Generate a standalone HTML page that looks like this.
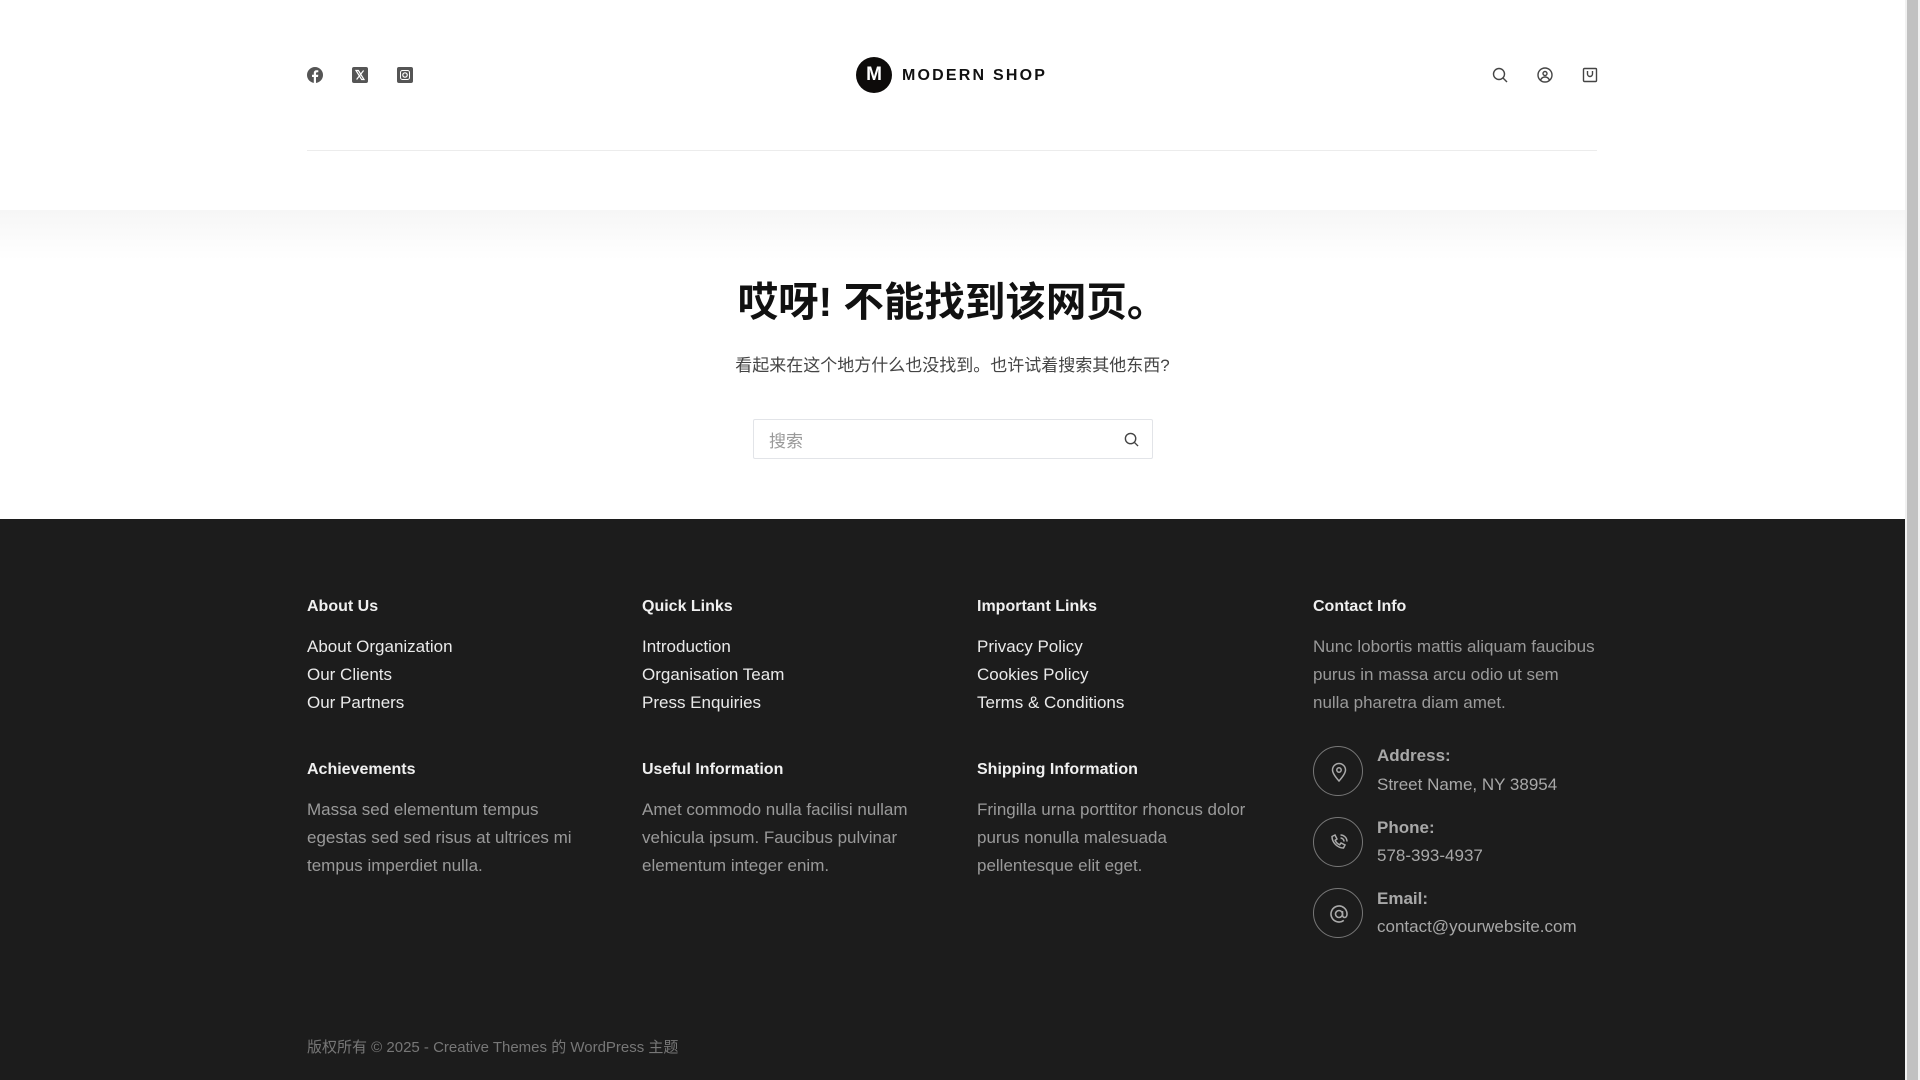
<!DOCTYPE html>
<html><head><meta charset="utf-8"><style>
*{margin:0;padding:0;box-sizing:border-box}
html,body{width:1920px;height:1080px;overflow:hidden;background:#fff;font-family:"Liberation Sans","Noto Sans CJK SC",sans-serif}
.a{position:absolute;white-space:nowrap}
#sb{position:absolute;left:1905px;top:0;width:15px;height:1080px;background:#f1f1f1}
#sb div{position:absolute;left:2px;top:0;width:11px;height:1080px;background:#c1c1c1}
.hd{position:absolute;left:0;top:0;width:1905px;height:210px;background:#fff}
.shade{position:absolute;left:0;top:210px;width:1905px;height:50px;background:linear-gradient(#f6f6f6,#fff)}
.ft{position:absolute;left:0;top:519px;width:1905px;height:561px;background:#1c1c1c}
.h{font-size:16px;font-weight:bold;color:#f0f0f0}
.l{font-size:17px;color:#eaeaea;line-height:28px}
.p{font-size:17px;color:#9a9a9a;line-height:28px;white-space:normal;width:290px}
.c{position:absolute;width:50px;height:50px;border:1px solid #777;border-radius:50%}
.c svg{position:absolute;left:14px;top:14px}
.lb{font-size:17px;font-weight:bold;color:#a8a8a8}
.v{font-size:17px;color:#a8a8a8}
</style></head><body>
<div class="hd"></div>
<div class="shade"></div>
<svg class="a" style="left:307px;top:67px" width="16" height="16" viewBox="0 0 16 16"><circle cx="8" cy="8" r="8" fill="#555"/><path d="M9 16V10h2l.3-2.3H9V6.4c0-.6.2-1.1 1.1-1.1h1.2V3.3c-.5-.1-1.1-.1-1.700-.1-1.7 0-2.8 1-2.8 2.9v1.6H5V10h1.8v6z" fill="#fff"/></svg>
<svg class="a" style="left:352px;top:67px" width="16" height="16" viewBox="0 0 16 16"><rect width="16" height="16" rx="2" fill="#555"/><path d="M4 3.5h2.4l5.6 9H9.6zM11.6 3.5L4.6 12.5" stroke="#fff" stroke-width="1.2" fill="none"/></svg>
<svg class="a" style="left:397px;top:67px" width="16" height="16" viewBox="0 0 16 16"><rect width="16" height="16" rx="2" fill="#555"/><rect x="3.5" y="3.5" width="9" height="9" rx="2" fill="none" stroke="#fff" stroke-width="1"/><circle cx="8" cy="8" r="2.2" fill="none" stroke="#fff" stroke-width="1.2"/></svg>
<div class="a" style="left:856px;top:57px;width:36px;height:36px;border-radius:50%;background:#0d0b0a;color:#fff;font-weight:bold;font-size:19px;line-height:36px;text-align:center">M</div>
<div class="a" style="left:902px;top:67px;font-size:16px;font-weight:bold;letter-spacing:2.2px;color:#111">MODERN SHOP</div>
<svg class="a" style="left:1492px;top:67px" width="16" height="16" viewBox="0 0 16 16" fill="none" stroke="#444" stroke-width="1.4"><circle cx="7" cy="7" r="5.5"/><path d="M11 11l4 4"/></svg>
<svg class="a" style="left:1537px;top:67px" width="16" height="16" viewBox="0 0 16 16" fill="none" stroke="#444" stroke-width="1.4"><circle cx="8" cy="8" r="7"/><circle cx="8" cy="6.5" r="2"/><path d="M3.5 13c1-2 2.5-3 4.5-3s3.5 1 4.5 3"/></svg>
<svg class="a" style="left:1582px;top:67px" width="16" height="16" viewBox="0 0 16 16" fill="none" stroke="#444" stroke-width="1.4"><rect x="1.5" y="1.5" width="13" height="13" rx="1"/><path d="M5.5 4v3a2.5 2.5 0 005 0V4"/></svg>
<div class="a" style="left:307px;top:150px;width:1290px;height:1px;background:#ececec"></div>
<div class="a" style="left:0;width:1905px;text-align:center;top:269px;font-size:40.5px;font-weight:bold;color:#111">哎呀! 不能找到该网页。</div>
<div class="a" style="left:0;width:1905px;text-align:center;top:351px;font-size:17px;color:#444">看起来在这个地方什么也没找到。也许试着搜索其他东西?</div>
<div class="a" style="left:753px;top:419px;width:400px;height:40px;border:1px solid #e2e4e8;border-radius:2px"></div>
<div class="a" style="left:769px;top:427px;font-size:17px;color:#999">搜索</div>
<svg class="a" style="left:1124px;top:432px" width="15" height="15" viewBox="0 0 16 16" fill="none" stroke="#444" stroke-width="1.5"><circle cx="7" cy="7" r="5.5"/><path d="M11 11l4 4"/></svg>
<div class="ft"></div>
<div class="a h" style="left:307px;top:598px">About Us</div>
<div class="a h" style="left:642px;top:598px">Quick Links</div>
<div class="a h" style="left:977px;top:598px">Important Links</div>
<div class="a h" style="left:1313px;top:598px">Contact Info</div>
<div class="a l" style="left:307px;top:633px">About Organization<br>Our Clients<br>Our Partners</div>
<div class="a l" style="left:642px;top:633px">Introduction<br>Organisation Team<br>Press Enquiries</div>
<div class="a l" style="left:977px;top:633px">Privacy Policy<br>Cookies Policy<br>Terms &amp; Conditions</div>
<div class="a p" style="left:1313px;top:633px;width:283px">Nunc lobortis mattis aliquam faucibus purus in massa arcu odio ut sem nulla pharetra diam amet.</div>
<div class="a h" style="left:307px;top:761px">Achievements</div>
<div class="a h" style="left:642px;top:761px">Useful Information</div>
<div class="a h" style="left:977px;top:761px">Shipping Information</div>
<div class="a p" style="left:307px;top:796px;width:290px">Massa sed elementum tempus egestas sed sed risus at ultrices mi tempus imperdiet nulla.</div>
<div class="a p" style="left:642px;top:796px;width:290px">Amet commodo nulla facilisi nullam vehicula ipsum. Faucibus pulvinar elementum integer enim.</div>
<div class="a p" style="left:977px;top:796px;width:290px">Fringilla urna porttitor rhoncus dolor purus nonulla malesuada pellentesque elit eget.</div>
<div class="c" style="left:1313px;top:746px"><svg width="22" height="22" viewBox="0 0 22 22" fill="none" stroke="#aaa" stroke-width="1.5"><path d="M11 20c-4-4.5-6.5-8-6.5-11a6.5 6.5 0 0113 0c0 3-2.5 6.5-6.5 11z"/><circle cx="11" cy="9" r="2.2"/></svg></div>
<div class="c" style="left:1313px;top:817px"><svg width="22" height="22" viewBox="0 0 22 22" fill="none" stroke="#aaa" stroke-width="1.5"><path d="M4 4.5l3-1.5 2 4-1.8 1.3c.8 2 2.5 3.7 4.5 4.5L13 11l4 2-1.5 3c-6 0-11.5-5.5-11.5-11.5zM12.5 3a6.5 6.5 0 016.5 6.5M12.5 6a3.5 3.5 0 013.5 3.5"/></svg></div>
<div class="c" style="left:1313px;top:888px"><svg width="22" height="22" viewBox="0 0 22 22" fill="none" stroke="#aaa" stroke-width="1.6"><circle cx="11" cy="11" r="3.5"/><path d="M14.5 8v4c0 1.5 1 2.5 2.3 2.5S19 13 19 11a8 8 0 10-3.2 6.4"/></svg></div>
<div class="a lb" style="left:1377px;top:746px">Address:</div>
<div class="a v" style="left:1377px;top:775px">Street Name, NY 38954</div>
<div class="a lb" style="left:1377px;top:818px">Phone:</div>
<div class="a v" style="left:1377px;top:846px">578-393-4937</div>
<div class="a lb" style="left:1377px;top:889px">Email:</div>
<div class="a v" style="left:1377px;top:917px">contact@yourwebsite.com</div>
<div class="a" style="left:307px;top:1036px;font-size:15px;color:#777">版权所有 © 2025 - Creative Themes 的 WordPress 主题</div>
<div id="sb"><div></div></div>
</body></html>
